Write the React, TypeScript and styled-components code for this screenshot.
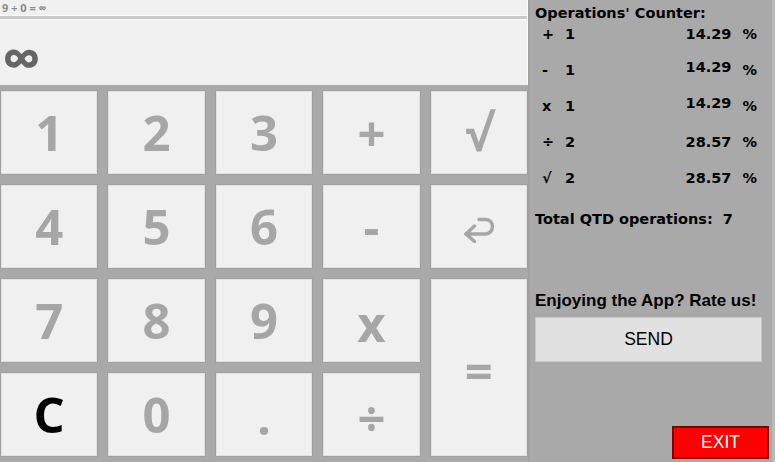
import React from "react";
import styled, { createGlobalStyle } from "styled-components";

const Global = createGlobalStyle`
  html, body { margin: 0; padding: 0; background: #a9a9a9; }
  #root { width: 775px; height: 462px; }
`;

const Window = styled.div`
  width: 775px;
  height: 462px;
  display: flex;
  background: #a9a9a9;
  overflow: hidden;
`;

const CalcColumn = styled.div`
  width: 528px;
  display: flex;
  flex-direction: column;
  gap: 5px;
`;

const Screen = styled.div`
  height: 85px;
  display: flex;
  flex-direction: column;
  background: #f0f0f0;
  border-right: 1px solid #fbfbfb;
  box-sizing: border-box;
`;

const History = styled.div`
  height: 17px;
  border-bottom: 1px solid #fafafa;
  padding-left: 2px;
  display: flex;
  align-items: center;
  font-family: "Open Sans", "Noto Sans", "DejaVu Sans", sans-serif;
  font-weight: 700;
  font-size: 11px;
  color: #8a8a8a;
  white-space: pre;
`;

const Display = styled.div`
  flex: 1;
  border-top: 3px solid #c9c9c9;
  box-shadow: inset 0 1px 0 #fbfbfb;
  padding: 0 0 3px 2px;
  display: flex;
  align-items: center;
  font-family: "Open Sans", "Noto Sans", "DejaVu Sans", sans-serif;
  font-weight: 700;
  font-size: 55px;
  color: #656565;
`;

const Keypad = styled.div`
  display: grid;
  grid-template-columns: repeat(5, 1fr);
  grid-template-rows: repeat(4, 85px);
  column-gap: 9px;
  row-gap: 9px;
`;

const Key = styled.button<{ $dark?: boolean; $tall?: boolean; $drop?: number }>`
  margin: 0;
  padding: ${(p) => p.$drop ?? 0}px 0 0 0;
  border: 1px solid #a0a0a0;
  box-shadow: inset 0 0 0 1px #e2e2e2;
  background: #f0f0f0;
  display: flex;
  align-items: center;
  justify-content: center;
  font-family: "Open Sans", "Noto Sans", "DejaVu Sans", sans-serif;
  font-weight: 700;
  font-size: 49px;
  line-height: 1;
  color: ${(p) => (p.$dark ? "#000000" : "#a6a6a6")};
  grid-row: ${(p) => (p.$tall ? "span 2" : "auto")};
`;

const Panel = styled.div`
  flex: 1;
  display: flex;
  flex-direction: column;
  border-left: 2px solid #a1a1a1;
  border-right: 3px solid #b9b9b9;
  padding: 4px 3px 3px 5px;
  font-family: "DejaVu Sans", Verdana, sans-serif;
  font-weight: 700;
  font-size: 14.5px;
  color: #000;
`;

const Title = styled.div`
  height: 18px;
  line-height: 18px;
  margin-bottom: 3px;
`;

const CountRow = styled.div`
  height: 36px;
  display: grid;
  grid-template-columns: 23px 1fr auto auto;
  align-items: start;
  padding: 0 12px 0 7px;
  line-height: 18px;
`;

const Cell = styled.span<{ $raise?: number }>`
  margin-top: ${(p) => (p.$raise ? -p.$raise : 0)}px;
`;

const Pct = styled(Cell)`
  text-align: right;
`;

const PctSign = styled.span`
  padding-left: 11px;
`;

const Total = styled.div`
  margin-top: 5px;
  line-height: 18px;
  white-space: pre;
`;

const Rate = styled.div`
  margin-top: 63px;
  font-family: "Liberation Sans", Arial, sans-serif;
  font-weight: 700;
  font-size: 17px;
  line-height: 20px;
`;

const SendButton = styled.button`
  margin: 6px 7px 0 0;
  height: 45px;
  border: 1px solid #c8c8c8;
  background: #e1e1e1;
  font-family: "Liberation Sans", Arial, sans-serif;
  font-size: 17.5px;
  color: #000;
  padding: 0;
`;

const ExitButton = styled.button`
  margin-top: auto;
  align-self: flex-end;
  width: 97px;
  height: 33px;
  border: 2px solid #7d0000;
  background: #ff0000;
  color: #ffffff;
  font-family: "Liberation Sans", Arial, sans-serif;
  font-size: 17.5px;
  padding: 0;
`;

const ReturnIcon = () => (
  <svg width="32" height="26" viewBox="0 0 32 26" fill="none" style={{ marginTop: 6 }}>
    <path
      d="M16 2.5 H23 C27 2.5 29.5 6 29.5 9.5 C29.5 13.5 26.5 17 22.5 17 H3"
      stroke="#a6a6a6"
      strokeWidth="3.4"
      strokeLinecap="round"
      strokeLinejoin="round"
    />
    <path
      d="M11.5 9 L3 17 L11.5 24.5"
      stroke="#a6a6a6"
      strokeWidth="3.4"
      strokeLinecap="round"
      strokeLinejoin="round"
    />
  </svg>
);

const counters = [
  { op: "+", n: 1, pct: "14.29", raise: 0 },
  { op: "-", n: 1, pct: "14.29", raise: 3 },
  { op: "x", n: 1, pct: "14.29", raise: 3 },
  { op: "÷", n: 2, pct: "28.57", raise: 0 },
  { op: "√", n: 2, pct: "28.57", raise: 0 },
];

export default function App() {
  return (
    <>
      <Global />
      <Window>
        <CalcColumn>
          <Screen>
            <History>9 ÷ 0 = ∞</History>
            <Display>∞</Display>
          </Screen>
          <Keypad>
            <Key>1</Key>
            <Key>2</Key>
            <Key>3</Key>
            <Key>+</Key>
            <Key>√</Key>
            <Key>4</Key>
            <Key>5</Key>
            <Key>6</Key>
            <Key>-</Key>
            <Key>
              <ReturnIcon />
            </Key>
            <Key>7</Key>
            <Key>8</Key>
            <Key>9</Key>
            <Key $drop={6}>x</Key>
            <Key $tall $drop={6}>=</Key>
            <Key $dark>C</Key>
            <Key>0</Key>
            <Key $drop={4}>.</Key>
            <Key $drop={6}>÷</Key>
          </Keypad>
        </CalcColumn>
        <Panel>
          <Title>Operations' Counter:</Title>
          {counters.map((c) => (
            <CountRow key={c.op}>
              <Cell>{c.op}</Cell>
              <Cell>{c.n}</Cell>
              <Pct $raise={c.raise}>{c.pct}</Pct>
              <PctSign>%</PctSign>
            </CountRow>
          ))}
          <Total>Total QTD operations:  7</Total>
          <Rate>Enjoying the App? Rate us!</Rate>
          <SendButton>SEND</SendButton>
          <ExitButton>EXIT</ExitButton>
        </Panel>
      </Window>
    </>
  );
}
